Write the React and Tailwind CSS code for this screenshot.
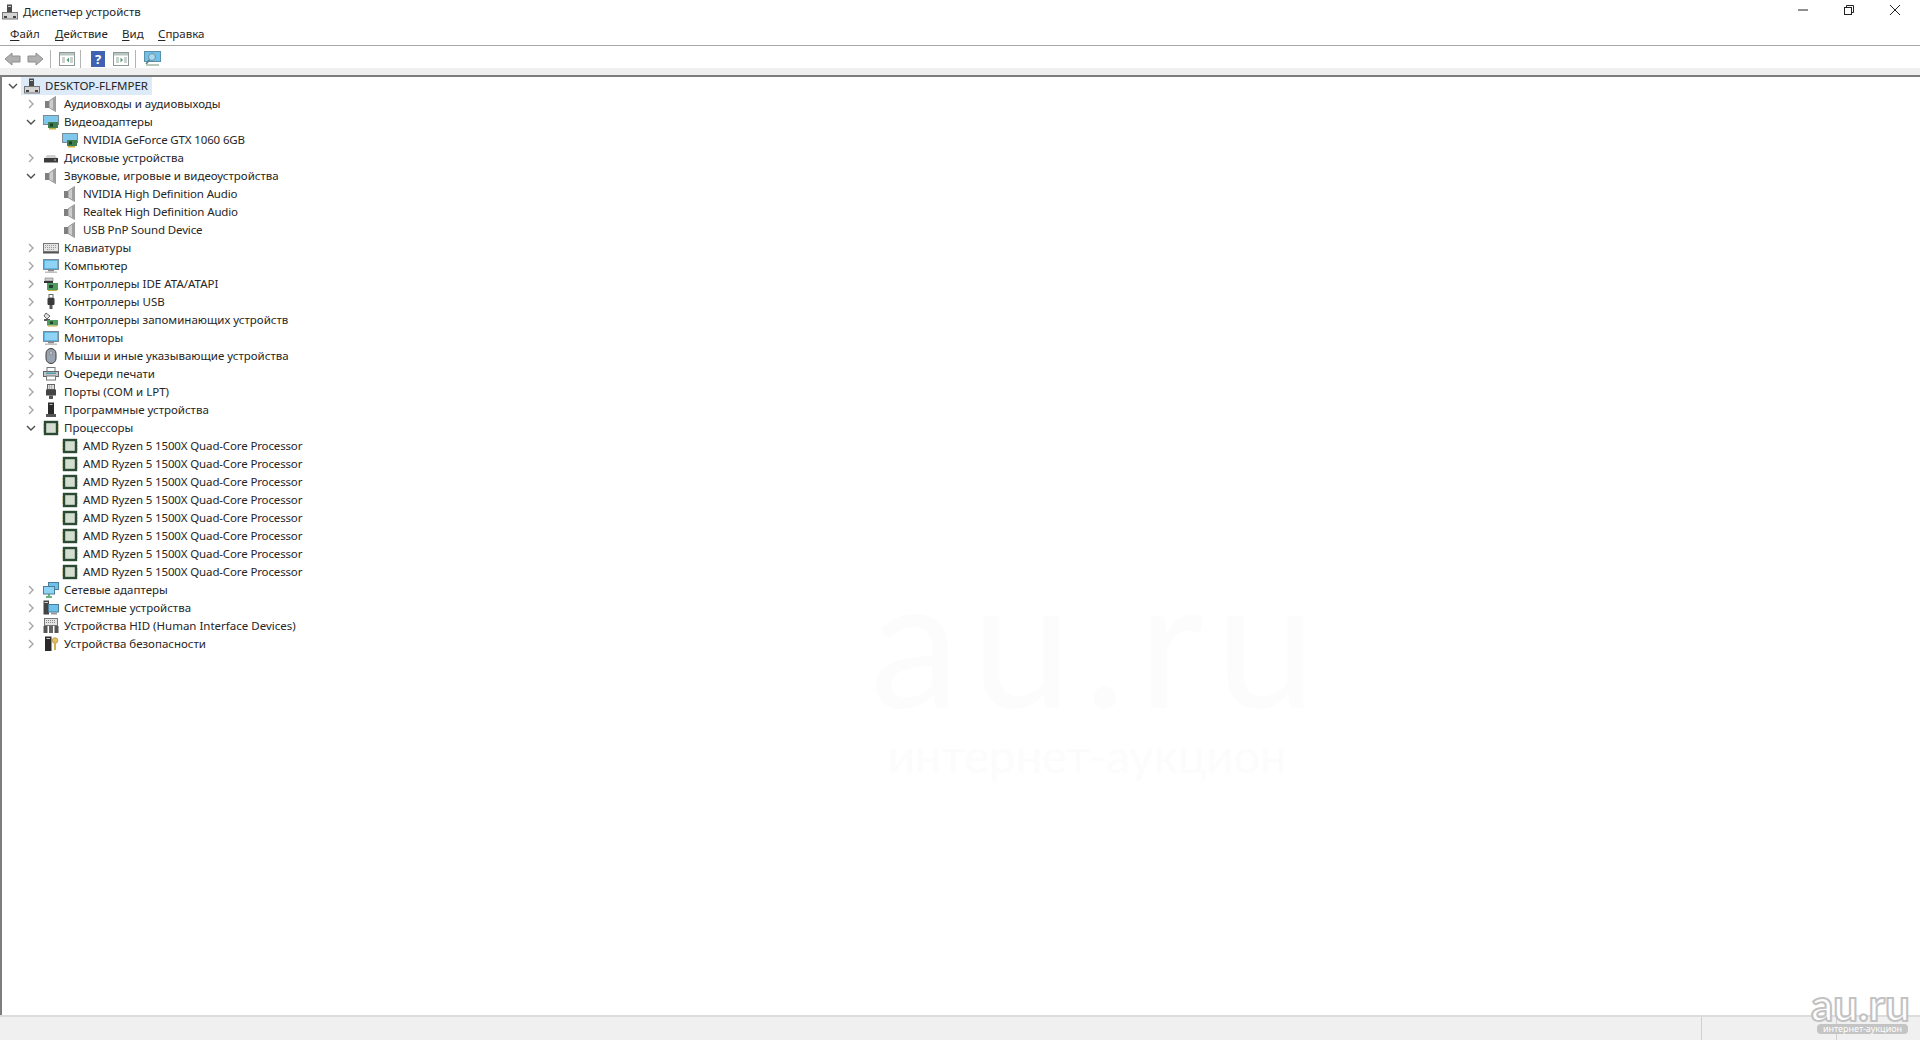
import React from "react";

const Speaker = () => (
  <svg width="16" height="16" viewBox="0 0 16 16">
    <rect x="2" y="5" width="4" height="7" fill="#7f7f7f" />
    <path d="M6 5 L12.5 0.5 V15.5 L6 11.5 Z" fill="#cdcdcd" stroke="#858585" strokeWidth="0.8" />
    <rect x="10" y="2" width="2.5" height="12" fill="#a0a0a0" />
  </svg>
);
const Monitor = () => (
  <svg width="16" height="16" viewBox="0 0 16 16">
    <rect x="0.5" y="1.5" width="15" height="10" fill="#5cb4e4" stroke="#7a8a96" />
    <rect x="2" y="3" width="12" height="7" fill="#8fd4f4" />
    <rect x="5" y="12" width="6" height="1.5" fill="#8a8a8a" />
    <rect x="2" y="13.5" width="12" height="1.5" fill="#c0c0c0" />
  </svg>
);
const Video = () => (
  <svg width="16" height="16" viewBox="0 0 16 16">
    <rect x="0.5" y="1.5" width="15" height="9" fill="#7fc8ec" stroke="#7a8a96" />
    <rect x="5" y="8" width="10" height="6" fill="#3f7f4f" />
    <rect x="6" y="14" width="7" height="1.5" fill="#c8b040" />
    <rect x="7" y="9.5" width="3" height="3" fill="#1f3f2a" />
  </svg>
);
const Disk = () => (
  <svg width="16" height="16" viewBox="0 0 16 16">
    <path d="M2 8 L4 5 H12 L14 8 Z" fill="#d0d0d0" />
    <rect x="1" y="8" width="14" height="4.5" fill="#3c3c3c" />
    <rect x="11" y="9.5" width="2" height="1" fill="#c8c8c8" />
  </svg>
);
const Keyboard = () => (
  <svg width="16" height="16" viewBox="0 0 16 16">
    <rect x="0.5" y="3.5" width="15" height="8" fill="#e4e4e4" stroke="#777" />
    <path d="M2 5.5 H14 M2 7.5 H14 M4 9.5 H12" stroke="#9a9a9a" strokeDasharray="1 1" />
    <rect x="0" y="12" width="16" height="1.5" fill="#555" />
  </svg>
);
const Ide = () => (
  <svg width="16" height="16" viewBox="0 0 16 16">
    <path d="M2 2 H10 V5 H2 Z" fill="#cfcfcf" stroke="#777" strokeWidth="0.6" />
    <rect x="1" y="5" width="9" height="2" fill="#333" />
    <rect x="4" y="7" width="11" height="7" fill="#4f9a5f" />
    <rect x="6" y="9" width="4" height="3" fill="#1f3f2a" />
    <rect x="5" y="14" width="9" height="1" fill="#c8b040" />
  </svg>
);
const Usb = () => (
  <svg width="16" height="16" viewBox="0 0 16 16">
    <rect x="6" y="0.5" width="4" height="3.5" fill="#fff" stroke="#666" />
    <rect x="4.5" y="4" width="7" height="7" rx="1" fill="#3a3a3a" />
    <rect x="6.5" y="11" width="3" height="4" fill="#555" />
  </svg>
);
const Storage = () => (
  <svg width="16" height="16" viewBox="0 0 16 16">
    <path d="M3 1 L7 4 L4 7 L1 4 Z" fill="#e0e0e0" stroke="#444" strokeWidth="0.8" />
    <rect x="1" y="7" width="6" height="2" fill="#555" />
    <rect x="4" y="8" width="11" height="5.5" fill="#4f9a5f" />
    <rect x="7" y="9.5" width="3" height="2.5" fill="#1f3f2a" />
    <rect x="5" y="13.5" width="9" height="1" fill="#c8b040" />
  </svg>
);
const Mouse = () => (
  <svg width="16" height="16" viewBox="0 0 16 16">
    <rect x="3" y="0.5" width="10" height="15" rx="5" fill="#9aa3b0" stroke="#3c3c3c" />
    <rect x="7" y="3" width="2" height="4" rx="1" fill="#e8e8e8" stroke="#555" strokeWidth="0.5" />
  </svg>
);
const Printer = () => (
  <svg width="16" height="16" viewBox="0 0 16 16">
    <rect x="4" y="1.5" width="8" height="4" fill="#fff" stroke="#777" />
    <rect x="0.5" y="5.5" width="15" height="5" fill="#c4c4c4" stroke="#666" />
    <rect x="3" y="6.5" width="10" height="1.5" fill="#4f9fb0" />
    <rect x="3.5" y="10" width="9" height="4" fill="#fff" stroke="#777" />
  </svg>
);
const Port = () => (
  <svg width="16" height="16" viewBox="0 0 16 16">
    <rect x="4.5" y="0.5" width="7" height="5" fill="#ddd" stroke="#666" />
    <path d="M6 2 H10 M6 4 H10" stroke="#888" strokeDasharray="1 1" />
    <rect x="3" y="5.5" width="10" height="6" fill="#444" />
    <rect x="6" y="11.5" width="4" height="3.5" fill="#555" />
  </svg>
);
const Firmware = () => (
  <svg width="16" height="16" viewBox="0 0 16 16">
    <rect x="5" y="0.5" width="6" height="11.5" fill="#2a2a2a" />
    <rect x="6.5" y="2" width="3" height="1" fill="#bbb" />
    <rect x="3" y="12" width="10" height="3" fill="#555" />
  </svg>
);
const Cpu = () => (
  <svg width="16" height="16" viewBox="0 0 16 16">
    <rect x="2" y="2" width="12" height="12" fill="#d3ddd0" stroke="#2b4a33" strokeWidth="2.4" />
    <path d="M1 5 H0 M1 8 H0 M1 11 H0 M15 5 H16 M15 8 H16 M15 11 H16" stroke="#b8a850" />
  </svg>
);
const Network = () => (
  <svg width="16" height="16" viewBox="0 0 16 16">
    <rect x="5.5" y="0.5" width="10" height="7" fill="#6fc0ea" stroke="#4a7f9a" />
    <rect x="0.5" y="4.5" width="11" height="7.5" fill="#8fd4f4" stroke="#4a7f9a" />
    <path d="M6 12 V14 M3 15 H9" stroke="#3a9a5a" strokeWidth="1.5" />
  </svg>
);
const SystemDev = () => (
  <svg width="16" height="16" viewBox="0 0 16 16">
    <rect x="0.5" y="0.5" width="5.5" height="14" fill="#444" />
    <rect x="1.5" y="2" width="3.5" height="1" fill="#ccc" />
    <rect x="5.5" y="4.5" width="10" height="7.5" fill="#6fc0ea" stroke="#4a7f9a" />
    <rect x="8" y="12.5" width="6" height="2" fill="#999" />
  </svg>
);
const Hid = () => (
  <svg width="16" height="16" viewBox="0 0 16 16">
    <rect x="1.5" y="0.5" width="13" height="7" fill="#e4e4e4" stroke="#777" />
    <path d="M3 2.5 H13 M3 4.5 H13" stroke="#888" strokeDasharray="1 1" />
    <rect x="0.5" y="8" width="4" height="7" fill="#555" />
    <rect x="6" y="8" width="4" height="7" fill="#666" />
    <rect x="11.5" y="8" width="4" height="7" fill="#555" />
  </svg>
);
const Security = () => (
  <svg width="16" height="16" viewBox="0 0 16 16">
    <rect x="2" y="0.5" width="6.5" height="14.5" fill="#2a2a2a" />
    <rect x="3.5" y="2" width="3.5" height="1" fill="#ccc" />
    <circle cx="12" cy="4.5" r="2.8" fill="#e2c060" stroke="#a08030" strokeWidth="0.6" />
    <rect x="11" y="7" width="2" height="7" fill="#d4b050" />
  </svg>
);
const Computer = ({ size = 16 }) => (
  <svg width={size} height={size} viewBox="0 0 16 16">
    <rect x="5" y="0.5" width="5" height="8" fill="#4a4a4a" />
    <rect x="6" y="2" width="3" height="1" fill="#ccc" />
    <rect x="0.5" y="8.5" width="15" height="6.5" fill="#d4d4d4" stroke="#777" />
    <rect x="2" y="12" width="3" height="2" fill="#444" />
    <rect x="11" y="12" width="3" height="2" fill="#444" />
  </svg>
);

const Chevron = ({ state }) => (
  <span className="w-[16px] h-[18px] shrink-0 flex items-center justify-center">
    {state === "open" && (
      <svg width="10" height="10" viewBox="0 0 10 10">
        <path d="M1 3 L5 7 L9 3" fill="none" stroke="#4d4d4d" strokeWidth="1.4" />
      </svg>
    )}
    {state === "closed" && (
      <svg width="10" height="10" viewBox="0 0 10 10">
        <path d="M3 1 L7 5 L3 9" fill="none" stroke="#a6a6a6" strokeWidth="1.4" />
      </svg>
    )}
  </span>
);

const cpus = Array.from({ length: 8 }, () => [2, null, Cpu, "AMD Ryzen 5 1500X Quad-Core Processor"]);

const rows = [
  [1, "closed", Speaker, "Аудиовходы и аудиовыходы"],
  [1, "open", Video, "Видеоадаптеры"],
  [2, null, Video, "NVIDIA GeForce GTX 1060 6GB"],
  [1, "closed", Disk, "Дисковые устройства"],
  [1, "open", Speaker, "Звуковые, игровые и видеоустройства"],
  [2, null, Speaker, "NVIDIA High Definition Audio"],
  [2, null, Speaker, "Realtek High Definition Audio"],
  [2, null, Speaker, "USB PnP Sound Device"],
  [1, "closed", Keyboard, "Клавиатуры"],
  [1, "closed", Monitor, "Компьютер"],
  [1, "closed", Ide, "Контроллеры IDE ATA/ATAPI"],
  [1, "closed", Usb, "Контроллеры USB"],
  [1, "closed", Storage, "Контроллеры запоминающих устройств"],
  [1, "closed", Monitor, "Мониторы"],
  [1, "closed", Mouse, "Мыши и иные указывающие устройства"],
  [1, "closed", Printer, "Очереди печати"],
  [1, "closed", Port, "Порты (COM и LPT)"],
  [1, "closed", Firmware, "Программные устройства"],
  [1, "open", Cpu, "Процессоры"],
  ...cpus,
  [1, "closed", Network, "Сетевые адаптеры"],
  [1, "closed", SystemDev, "Системные устройства"],
  [1, "closed", Hid, "Устройства HID (Human Interface Devices)"],
  [1, "closed", Security, "Устройства безопасности"],
];

const Row = ({ level, state, Icon, label }) => (
  <div className={"flex items-center h-[18px] " + (level === 2 ? "pl-[60px]" : "pl-[21px]")}>
    {level === 1 && <Chevron state={state} />}
    <span className={"w-[16px] h-[16px] shrink-0 mr-[5px] " + (level === 1 ? "ml-[4px]" : "")}>
      <Icon />
    </span>
    <span className={"whitespace-nowrap " + (level === 2 ? "tracking-[-0.14px]" : "")}>{label}</span>
  </div>
);

const Menu = ({ first, rest, className }) => (
  <span className={className}>
    <span className="underline underline-offset-2">{first}</span>
    {rest}
  </span>
);

const Sep = ({ className }) => <span className={"w-px h-[18px] bg-[#b4b4b4] shrink-0 " + className} />;

const Arrow = ({ flip }) => (
  <svg width="17" height="14" viewBox="0 0 17 14" className={flip ? "-scale-x-100" : ""}>
    <path d="M1 7 L8 1 V4 H16 V10 H8 V13 Z" fill="#b0b0b0" stroke="#8f8f8f" />
  </svg>
);

const PanelIcon = ({ right }) => (
  <svg width="16" height="14" viewBox="0 0 16 14">
    <rect x="0.5" y="0.5" width="15" height="13" fill="#fff" stroke="#8f9a94" />
    <rect x="1" y="1" width="14" height="2.5" fill="#b8c4be" />
    <path d="M3 6 H6 M3 8 H6 M3 10 H6 M11 6 H14 M11 8 H14 M11 10 H14" stroke="#9aa5a0" />
    <path d={right ? "M7.5 5.5 L10 8 L7.5 10.5 Z" : "M10 5.5 L7.5 8 L10 10.5 Z"} fill="#4f9a6f" />
  </svg>
);

export default function App() {
  return (
    <div
      className="relative w-[1920px] h-[1040px] overflow-hidden flex flex-col bg-white text-[11.5px] leading-[18px] text-[#262626]"
      style={{ fontFamily: '"Noto Sans", sans-serif' }}
    >
      <header className="h-[24px] shrink-0 flex items-center">
        <span className="ml-[2px] mr-[5px] flex">
          <Computer size={16} />
        </span>
        <span className="text-[11.5px]">Диспетчер устройств</span>
        <div className="ml-auto mb-[4px] flex items-center">
          <span className="w-[46px] flex justify-center">
            <svg width="10" height="10" viewBox="0 0 10 10"><path d="M0 5 H10" stroke="#222" /></svg>
          </span>
          <span className="w-[46px] flex justify-center">
            <svg width="10" height="10" viewBox="0 0 10 10" fill="none" stroke="#222">
              <rect x="0.5" y="2.5" width="7" height="7" />
              <path d="M2.5 2.5 V0.5 H9.5 V7.5 H7.5" />
            </svg>
          </span>
          <span className="w-[46px] mr-[2px] flex justify-center">
            <svg width="10" height="10" viewBox="0 0 10 10" stroke="#222"><path d="M0 0 L10 10 M10 0 L0 10" /></svg>
          </span>
        </div>
      </header>

      <nav className="h-[22px] shrink-0 flex items-center pl-[10px] pb-px border-b border-[#a8a8a8]">
        <Menu first="Ф" rest="айл" className="w-[45px]" />
        <Menu first="Д" rest="ействие" className="w-[67px]" />
        <Menu first="В" rest="ид" className="w-[36px]" />
        <Menu first="С" rest="правка" />
      </nav>

      <div className="h-[22px] shrink-0 flex items-center pl-[4px] pt-[3px]">
        <Arrow />
        <span className="w-[6px]" />
        <Arrow flip />
        <Sep className="ml-[6px] mr-[8px]" />
        <PanelIcon />
        <Sep className="ml-[5px] mr-[10px]" />
        <svg width="14" height="16" viewBox="0 0 14 16">
          <rect width="14" height="16" fill="#3f63b0" />
          <text x="7" y="13" textAnchor="middle" fill="#fff" fontSize="13" fontWeight="700">?</text>
        </svg>
        <span className="w-[8px]" />
        <PanelIcon right />
        <Sep className="ml-[6px] mr-[8px]" />
        <svg width="17" height="16" viewBox="0 0 17 16">
          <rect x="0.5" y="0.5" width="16" height="10" fill="#6fc0ea" stroke="#5a8fa8" />
          <circle cx="8" cy="6" r="3.5" fill="#a9d9ef" stroke="#6f8f9f" />
          <path d="M5.5 9 L2 13" stroke="#4f7f7f" strokeWidth="1.5" />
          <rect x="2" y="13" width="13" height="2" fill="#b8c8b8" />
        </svg>
      </div>

      <div className="h-[7px] shrink-0 bg-[#f0f0f0]" />

      <main className="relative flex-1 min-h-0 border-t-2 border-l-2 border-[#7d7d7d]">
        <div className="flex items-center h-[18px] pl-[3px]">
          <Chevron state="open" />
          <span className="h-[18px] pl-[3px] pr-[4px] flex items-center bg-[#dcebf7]">
            <span className="w-[16px] h-[16px] mr-[5px]"><Computer /></span>
            DESKTOP-FLFMPER
          </span>
        </div>
        {rows.map((r, i) => (
          <Row key={i} level={r[0]} state={r[1]} Icon={r[2]} label={r[3]} />
        ))}

        <div className="absolute left-[868px] top-[511px] text-[#fcfcfc] text-[180px] leading-[100px] whitespace-nowrap tracking-[12px]" style={{ fontFamily: "Lato, sans-serif" }}>
          au.ru
        </div>
        <div className="absolute left-[886px] top-[648px] text-[#fcfcfc] text-[47px] leading-[60px] whitespace-nowrap" style={{ fontFamily: "Lato, sans-serif" }}>
          интернет-аукцион
        </div>
      </main>

      <footer className="h-[25px] shrink-0 bg-[#f0f0f0] border-t-2 border-[#dcdcdc] flex justify-end">
        <span className="w-[135px] border-l border-[#d0d0d0]" />
        <span className="w-[84px] border-l border-[#d0d0d0]" />
      </footer>

      <div className="absolute left-[1811px] top-[988px] text-[44px] leading-[32px] font-bold text-white [-webkit-text-stroke:2px_#c2c2c2] whitespace-nowrap" style={{ fontFamily: "Lato, sans-serif" }}>
        au.ru
      </div>
      <div className="absolute left-[1817px] top-[1024px] w-[91px] h-[10px] rounded-[4px] bg-[#c4c4c4] text-white text-[9px] leading-[10px] text-center whitespace-nowrap">
        интернет-аукцион
      </div>
    </div>
  );
}
